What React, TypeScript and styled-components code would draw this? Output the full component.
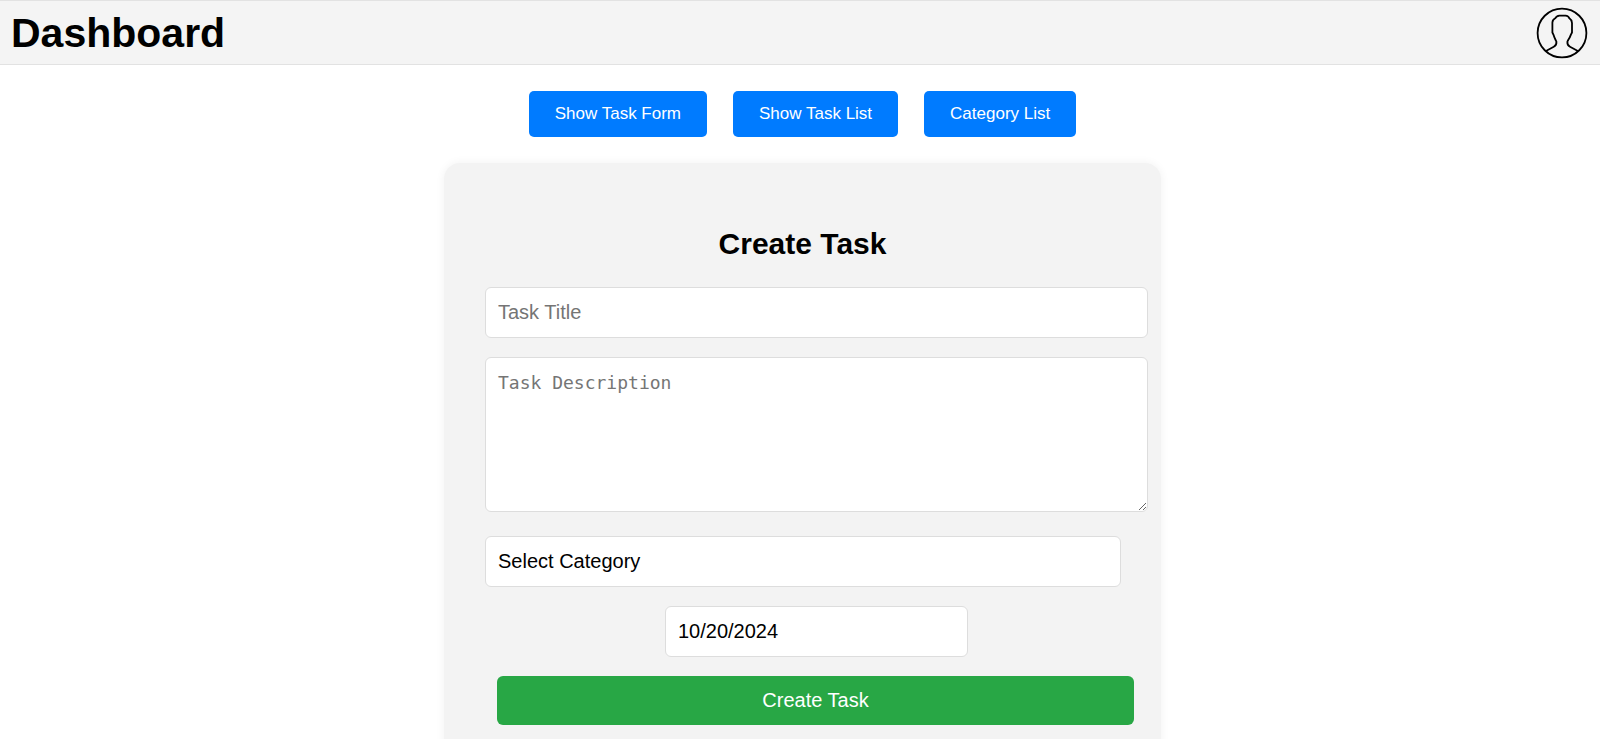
import React, { useState } from "react";
import styled, { createGlobalStyle, css } from "styled-components";

const GlobalStyle = createGlobalStyle`
  body {
    margin: 0;
    background: #ffffff;
    color: #000000;
    font-family: "Liberation Sans", Arial, sans-serif;
  }
`;

const Header = styled.header`
  display: flex;
  align-items: center;
  justify-content: space-between;
  box-sizing: border-box;
  min-height: 65px;
  padding: 0 12px 0 11px;
  background: #f4f4f4;
  border-top: 1px solid #e2e2e2;
  border-bottom: 1px solid #e2e2e2;
`;

const PageTitle = styled.h1`
  margin: 0;
  font-size: 41px;
  line-height: 46px;
`;

const ProfileButton = styled.button`
  display: flex;
  padding: 0;
  border: 0;
  background: none;
  cursor: pointer;
`;

const Main = styled.main`
  display: flex;
  flex-direction: column;
  align-items: center;
  gap: 26px;
  padding: 26px 0 26px 5px;
`;

const Toolbar = styled.nav`
  display: flex;
  flex-wrap: wrap;
  gap: 26px;
`;

const ViewButton = styled.button`
  padding: 13px 26px;
  border: 0;
  border-radius: 5px;
  background: #007bff;
  color: #ffffff;
  font-family: inherit;
  font-size: 17px;
  line-height: 20px;
  cursor: pointer;
`;

const Card = styled.section`
  box-sizing: border-box;
  width: 100%;
  max-width: 717px;
  padding: 63px 13px 40px 41px;
  border-radius: 16px;
  background: #f3f3f3;
  box-shadow: 0 0 10px rgba(0, 0, 0, 0.06);
`;

const CardTitle = styled.h2`
  margin: 0 28px 25px 0;
  font-size: 30px;
  line-height: 36px;
  text-align: center;
`;

const Form = styled.form`
  display: flex;
  flex-direction: column;
  gap: 19px;
`;

const field = css`
  box-sizing: border-box;
  margin: 0;
  padding: 12px;
  border: 1px solid #dddddd;
  border-radius: 6px;
  background: #ffffff;
  color: #000000;
  font-family: inherit;
  font-size: 20px;
  line-height: 25px;

  &::placeholder {
    color: #757575;
  }
`;

const TextField = styled.input<{ $compact?: boolean }>`
  ${field}
  align-self: ${(p) => (p.$compact ? "center" : "stretch")};
  width: ${(p) => (p.$compact ? "303px" : "auto")};
`;

const DescriptionField = styled.textarea`
  ${field}
  height: 155px;
  margin-bottom: 5px;
  font-family: "DejaVu Sans Mono", monospace;
  font-size: 18px;
  resize: vertical;
`;

const CategorySelect = styled.select`
  ${field}
  appearance: none;
  margin-right: 27px;
`;

const SubmitButton = styled.button`
  margin: 0 14px 0 12px;
  padding: 12px;
  border: 0;
  border-radius: 6px;
  background: #28a745;
  color: #ffffff;
  font-family: inherit;
  font-size: 20px;
  line-height: 25px;
  cursor: pointer;
`;

const ProfileIcon = () => (
  <svg width="52" height="52" viewBox="0 0 52 52" fill="none" stroke="#000" strokeWidth="1.8" aria-hidden="true">
    <circle cx="26" cy="26" r="24.4" />
    <path
      strokeLinejoin="round"
      d="M9.5 44.2 L17.8 39.8 Q20.8 38.2 20.4 34.6 L19.6 33 Q18.4 30.8 17.4 27.6 L16.4 25.5 V15.5 Q16.6 12.6 19.2 11.3 Q20.4 8.8 23.5 8.6 H29.5 Q32.4 8.8 33.4 11.3 Q35.8 12.8 36 16 V25.5 L34.9 27.6 Q33.8 30.8 32.2 33 L31.4 34.6 Q31 38.2 34 39.8 L42.3 44.2"
    />
  </svg>
);

const views = ["Show Task Form", "Show Task List", "Category List"];

export default function App() {
  const [dueDate, setDueDate] = useState("10/20/2024");

  return (
    <>
      <GlobalStyle />
      <Header>
        <PageTitle>Dashboard</PageTitle>
        <ProfileButton type="button" aria-label="Profile">
          <ProfileIcon />
        </ProfileButton>
      </Header>
      <Main>
        <Toolbar>
          {views.map((view) => (
            <ViewButton key={view} type="button">
              {view}
            </ViewButton>
          ))}
        </Toolbar>
        <Card>
          <CardTitle>Create Task</CardTitle>
          <Form onSubmit={(e) => e.preventDefault()}>
            <TextField type="text" placeholder="Task Title" aria-label="Task Title" />
            <DescriptionField placeholder="Task Description" aria-label="Task Description" />
            <CategorySelect aria-label="Category">
              <option>Select Category</option>
            </CategorySelect>
            <TextField
              $compact
              type="text"
              aria-label="Due date"
              value={dueDate}
              onChange={(e) => setDueDate(e.target.value)}
            />
            <SubmitButton type="submit">Create Task</SubmitButton>
          </Form>
        </Card>
      </Main>
    </>
  );
}
